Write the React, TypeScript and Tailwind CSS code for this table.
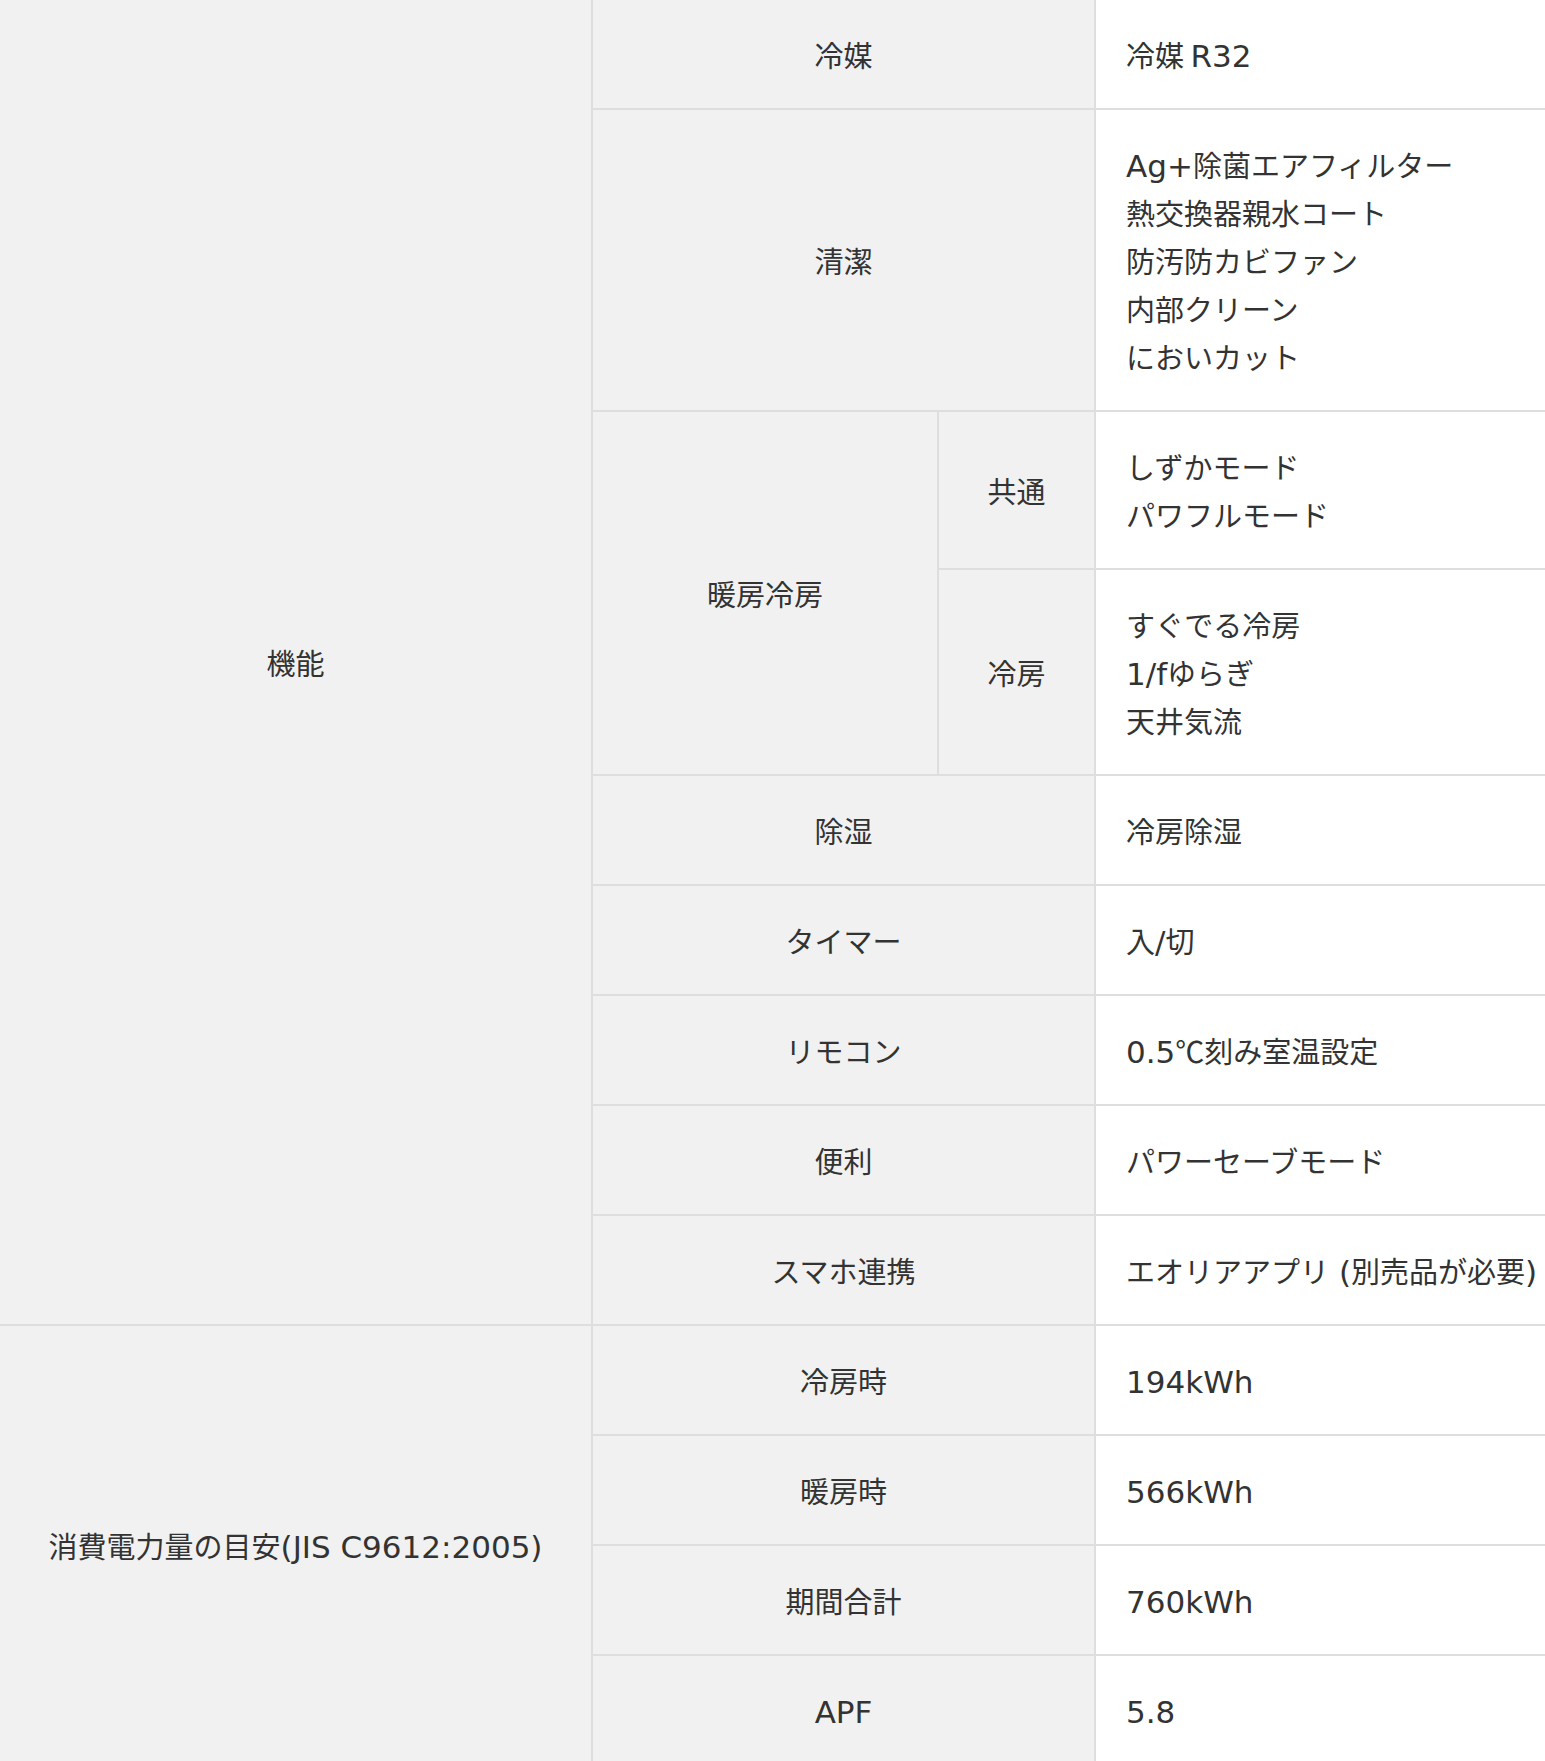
import React from 'react';

const FONT = { fontFamily: '"Noto Sans CJK JP", "Noto Sans", sans-serif' };

const th = 'bg-[#f1f1f1] border-2 border-[#dedede] text-center font-normal align-middle py-[30px] px-[20px]';
const td = 'bg-white border-2 border-[#dedede] border-r-0 text-left align-middle py-[30px] pl-[30px] pr-0 whitespace-nowrap';

// latin runs are set a bit larger, like the Japanese system font does
function L({ children }: { children: React.ReactNode }) {
  return <span className="font-['DejaVu_Sans'] text-[31px] leading-none font-normal">{children}</span>;
}

const SIMPLE_ROWS: { label: React.ReactNode; key: string; value: React.ReactNode }[] = [
  { key: 'dehum', label: '除湿', value: '冷房除湿' },
  { key: 'timer', label: 'タイマー', value: <>入<L>/</L>切</> },
  { key: 'remote', label: 'リモコン', value: <><L>0.5</L>℃刻み室温設定</> },
  { key: 'conv', label: '便利', value: 'パワーセーブモード' },
  { key: 'app', label: 'スマホ連携', value: <>エオリアアプリ<L> (</L>別売品が必要<L>)</L></> },
];

const POWER_ROWS: { key: string; label: React.ReactNode; value: React.ReactNode }[] = [
  { key: 'cool', label: '冷房時', value: <L>194kWh</L> },
  { key: 'heat', label: '暖房時', value: <L>566kWh</L> },
  { key: 'total', label: '期間合計', value: <L>760kWh</L> },
  { key: 'apf', label: <L>APF</L>, value: <L>5.8</L> },
];

export default function App() {
  return (
    <div className="w-[1545px] overflow-hidden bg-white text-[#333] text-[29px] leading-[48px]" style={FONT}>
      <table className="w-[1545px] table-fixed border-collapse">
        <colgroup>
          <col className="w-[592px]" />
          <col className="w-[346px]" />
          <col className="w-[157px]" />
          <col />
        </colgroup>
        <tbody>
          <tr>
            <th rowSpan={9} className={`${th} border-l-0 border-t-0`}>機能</th>
            <th colSpan={2} className={`${th} border-t-0`}>冷媒</th>
            <td className={`${td} border-t-0`}>冷媒 <L>R32</L></td>
          </tr>
          <tr>
            <th colSpan={2} className={th}>清潔</th>
            <td className={td}>
              <div><L>Ag+</L>除菌エアフィルター</div>
              <div>熱交換器親水コート</div>
              <div>防汚防カビファン</div>
              <div>内部クリーン</div>
              <div>においカット</div>
            </td>
          </tr>
          <tr>
            <th rowSpan={2} className={th}>暖房冷房</th>
            <th className={`${th} px-0`}>共通</th>
            <td className={td}>
              <div>しずかモード</div>
              <div>パワフルモード</div>
            </td>
          </tr>
          <tr>
            <th className={`${th} px-0`}>冷房</th>
            <td className={td}>
              <div>すぐでる冷房</div>
              <div><L>1/f</L>ゆらぎ</div>
              <div>天井気流</div>
            </td>
          </tr>
          {SIMPLE_ROWS.map((row) => (
            <tr key={row.key}>
              <th colSpan={2} className={th}>{row.label}</th>
              <td className={td}>{row.value}</td>
            </tr>
          ))}
          {POWER_ROWS.map((row, i) => (
            <tr key={row.key}>
              {i === 0 && (
                <th rowSpan={4} className={`${th} border-l-0 px-0`}>
                  消費電力量の目安<L>(JIS C9612:2005)</L>
                </th>
              )}
              <th colSpan={2} className={th}>{row.label}</th>
              <td className={td}>{row.value}</td>
            </tr>
          ))}
        </tbody>
      </table>
    </div>
  );
}
